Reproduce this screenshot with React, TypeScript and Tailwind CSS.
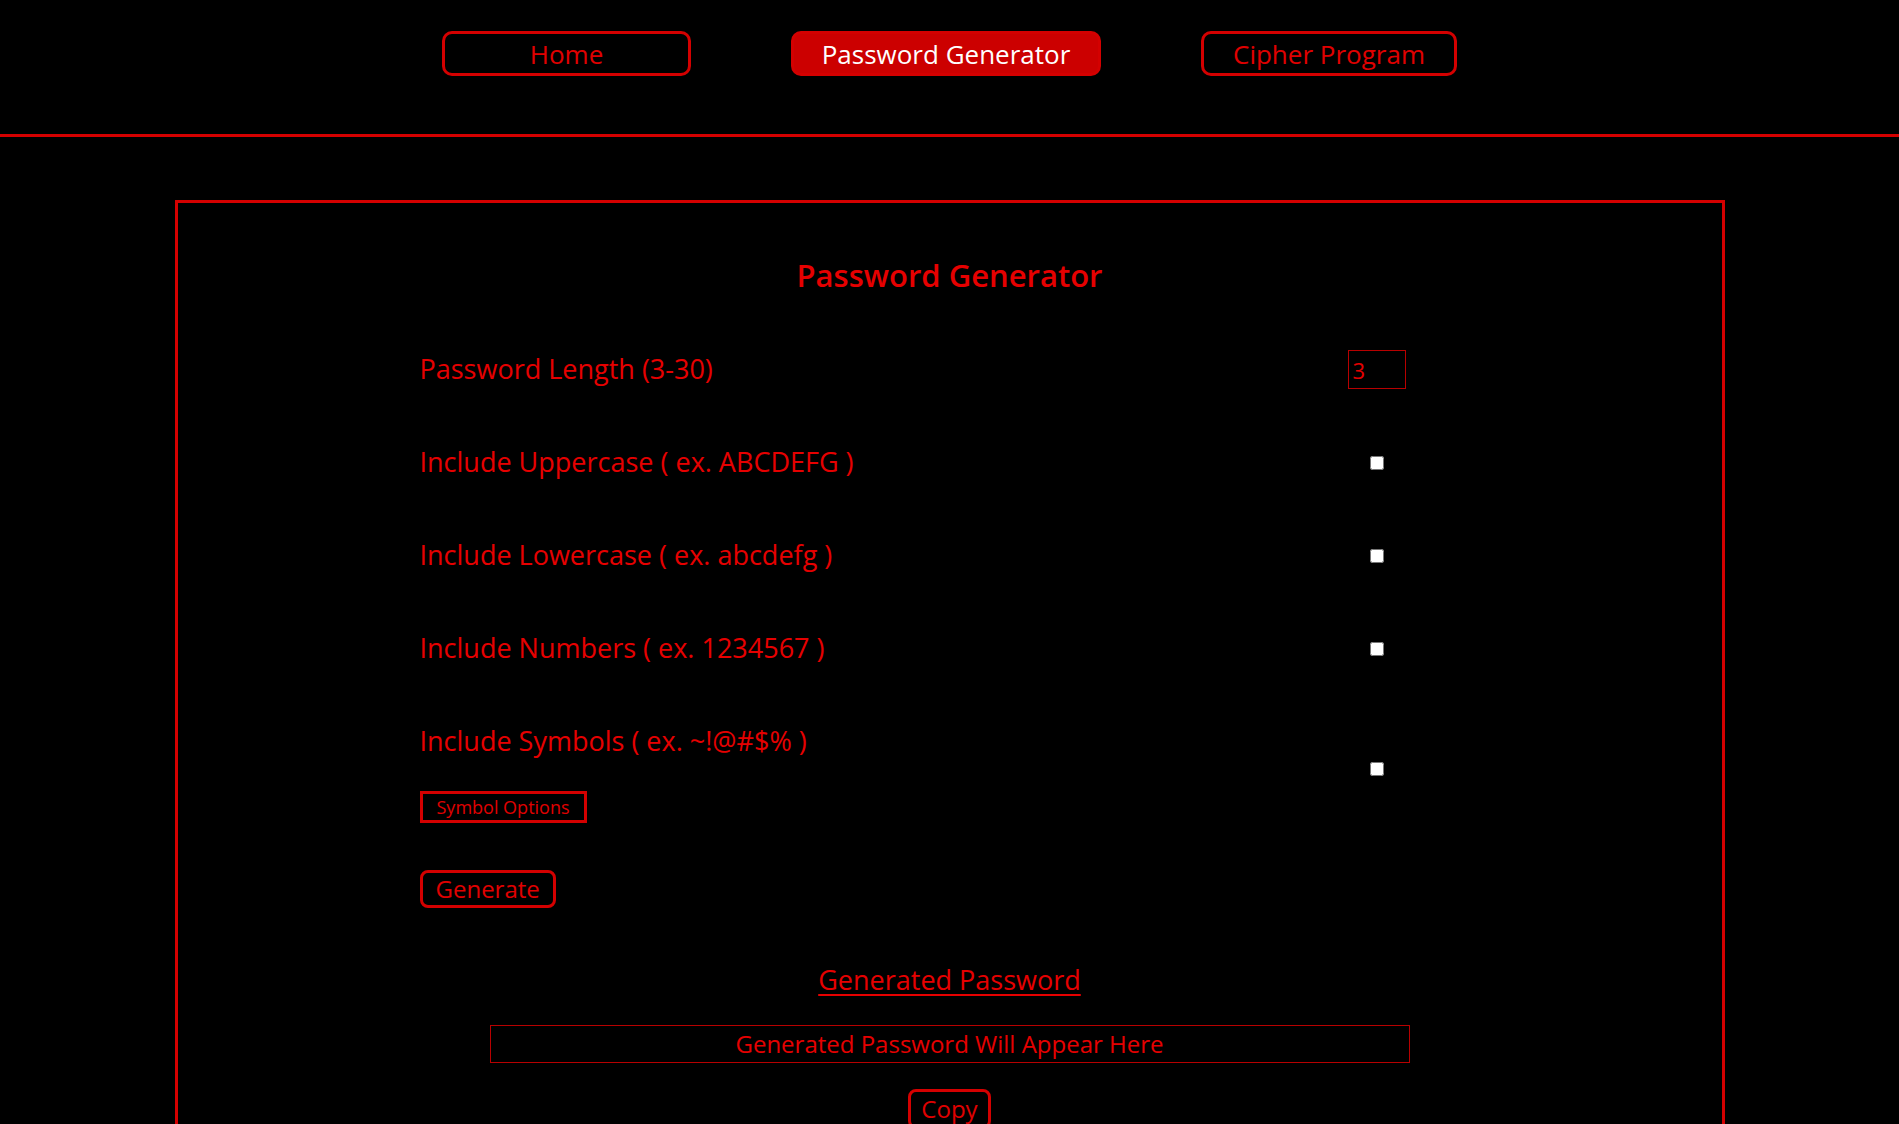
import React, { useState } from 'react'

const font = { fontFamily: '"Open Sans", "Noto Sans", sans-serif' }

const NavButton = ({ label, width, active }: { label: string; width: string; active?: boolean }) => {
	return (
		<button
			className={`${width} h-[45px] rounded-[10px] border-[3px] border-[#d40000] text-[26px] leading-none ${
				active ? 'bg-[#cc0000] text-white' : 'bg-black text-[#e00000]'
			}`}
		>
			{label}
		</button>
	)
}

const OptionRow = ({ label, checked, onChange }: { label: string; checked: boolean; onChange: () => void }) => {
	return (
		<div className="flex h-[93px] items-center justify-between">
			<span className="text-[27px] text-[#e60000]">{label}</span>
			<div className="flex w-[58px] justify-center">
				<input type="checkbox" className="h-[14px] w-[14px]" checked={checked} onChange={onChange} />
			</div>
		</div>
	)
}

const App = () => {
	const [length, setLength] = useState("3")
	const [upper, setUpper] = useState(false)
	const [lower, setLower] = useState(false)
	const [numbers, setNumbers] = useState(false)
	const [symbols, setSymbols] = useState(false)

	return (
		<div className="min-h-screen bg-black" style={font}>
			{/* nav */}
			<div className="flex h-[134px] items-start justify-center gap-[100px] pt-[31px]">
				<NavButton label="Home" width="w-[249px]" />
				<NavButton label="Password Generator" width="w-[310px]" active />
				<NavButton label="Cipher Program" width="w-[256px]" />
			</div>
			<div className="h-[3px] w-full bg-[#d40000]" />

			{/* main box */}
			<div className="mx-auto mt-[63px] w-[1550px] border-[3px] border-[#d40000] pb-[60px] pt-[52px]">
				<h1 className="text-center text-[31px] font-semibold leading-[40px] text-[#e60000]">Password Generator</h1>

				<div className="ml-[242px] mt-[28px] w-[986px]">
					<div className="flex h-[93px] items-center justify-between">
						<span className="text-[27px] text-[#e60000]">Password Length (3-30)</span>
						<input
							type="text"
							value={length}
							onChange={(e) => setLength(e.currentTarget.value)}
							className="h-[39px] w-[58px] border border-[#b80000] bg-black px-[4px] text-[22px] text-[#e60000] outline-none"
						/>
					</div>
					<OptionRow label="Include Uppercase ( ex. ABCDEFG )" checked={upper} onChange={() => setUpper(!upper)} />
					<OptionRow label="Include Lowercase ( ex. abcdefg )" checked={lower} onChange={() => setLower(!lower)} />
					<OptionRow label="Include Numbers ( ex. 1234567 )" checked={numbers} onChange={() => setNumbers(!numbers)} />

					<div className="flex items-center justify-between pt-[28px]">
						<div className="flex flex-col items-start">
							<span className="h-[36px] text-[27px] leading-[36px] text-[#e60000]">Include Symbols ( ex. ~!@#$% )</span>
							<button className="mt-[32px] h-[32px] border-[3px] border-[#d40000] px-[14px] text-[18px] leading-none text-[#e00000]">
								Symbol Options
							</button>
						</div>
						<div className="flex w-[58px] justify-center pb-[8px]">
							<input type="checkbox" className="h-[14px] w-[14px]" checked={symbols} onChange={() => setSymbols(!symbols)} />
						</div>
					</div>

					<button className="mt-[47px] h-[38px] rounded-[8px] border-[3px] border-[#d40000] px-[13px] text-[24px] leading-none text-[#e00000]">
						Generate
					</button>
				</div>

				<div className="mt-[53px] text-center text-[27px] leading-[38px] text-[#e60000] underline decoration-2 underline-offset-4">
					Generated Password
				</div>

				<div className="mx-auto mt-[26px] flex h-[38px] w-[920px] items-center justify-center border border-[#b80000] text-[24px] text-[#e60000]">
					Generated Password Will Appear Here
				</div>

				<div className="mt-[26px] flex justify-center">
					<button className="h-[40px] rounded-[8px] border-[3px] border-[#d40000] px-[10px] text-[24px] leading-none text-[#e00000]">
						Copy
					</button>
				</div>
			</div>
		</div>
	)
}

export default App
